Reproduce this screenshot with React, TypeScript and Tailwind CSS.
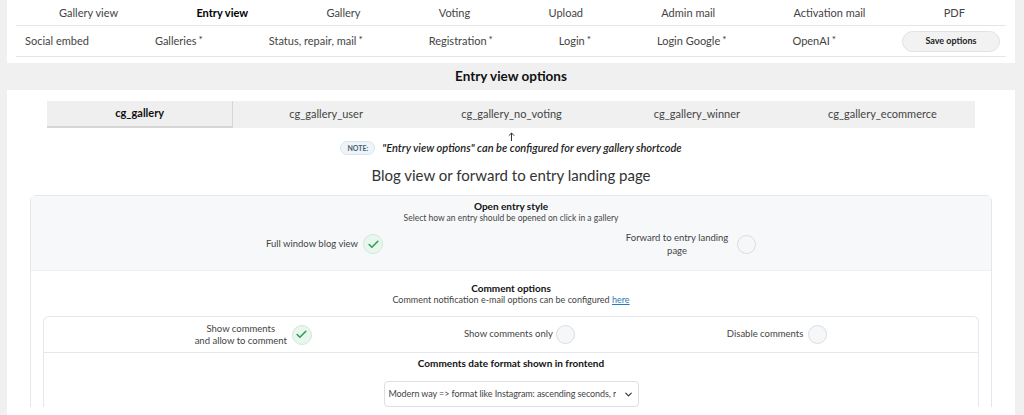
import { ChevronDown, Check } from "lucide-react"

const navTop = ["Gallery view", "Entry view", "Gallery", "Voting", "Upload", "Admin mail", "Activation mail", "PDF"]
const navBottom = ["Social embed", "Galleries", "Status, repair, mail", "Registration", "Login", "Login Google", "OpenAI"]
const tabs = ["cg_gallery", "cg_gallery_user", "cg_gallery_no_voting", "cg_gallery_winner", "cg_gallery_ecommerce"]

function Radio({ checked }: { checked?: boolean }) {
  if (checked) {
    return (
      <span className="flex h-[20px] w-[20px] shrink-0 items-center justify-center rounded-full border border-[#cfe9d8] bg-[#e9f6ee]">
        <Check className="h-[13px] w-[13px] text-[#2f9d5a]" strokeWidth={3} />
      </span>
    )
  }
  return <span className="block h-[19px] w-[19px] shrink-0 rounded-full border border-[#d9dde3] bg-[#f6f7f9]" />
}

export default function App() {
  return (
    <div className="flex min-h-[415px] bg-[#f0f0f1] font-['Lato',sans-serif] text-[#333]">
      <div className="ml-[7px] w-[1008px] bg-white">
        {/* top navigation */}
        <div className="mx-[9px] flex h-[26px] items-center justify-between border-b border-[#e6e6e6] pl-[43px] pr-[41px] pt-[1px] text-[11px] text-[#444]">
          {navTop.map((n) => (
            <span key={n} className={n === "Entry view" ? "font-bold text-black" : ""}>
              {n}
            </span>
          ))}
        </div>
        <div className="mx-[9px] flex h-[31px] items-center justify-between border-b border-[#e6e6e6] pl-[9px] pr-[6px] text-[11px] text-[#444]">
          {navBottom.map((n, i) => (
            <span key={n} className="flex items-start">
              {n}
              {i > 0 && <span className="ml-[2px] text-[10px] leading-[12px] text-[#333]">*</span>}
            </span>
          ))}
          <button className="h-[21px] w-[98px] rounded-full border border-[#e2e2e2] bg-[#f2f2f2] text-[9px] font-bold text-[#222]">
            Save options
          </button>
        </div>

        <div className="mt-[6px] flex h-[27px] items-center justify-center bg-[#f0f0f0] text-[13.5px] font-bold text-[#111]">
          Entry view options
        </div>

        {/* shortcode tabs */}
        <div className="mx-[40px] mt-[11px] flex h-[27px] bg-[#f0f0f0] text-[11px] text-[#444]">
          {tabs.map((t, i) => (
            <div
              key={t}
              className={
                i === 0
                  ? "flex flex-1 items-center justify-center border-r border-b-2 border-[#d6d6d6] bg-[#efefef] font-bold text-[#111]"
                  : "flex flex-1 items-center justify-center"
              }
            >
              {t}
            </div>
          ))}
        </div>

        <div className="mt-[4px] flex h-[9px] justify-center">
          <svg width="7" height="9" viewBox="0 0 7 9" fill="none" stroke="#333" strokeWidth="1">
            <path d="M3.5 9V1M0.8 3.7L3.5 1l2.7 2.7" />
          </svg>
        </div>
        <div className="flex h-[14px] items-center justify-center gap-[7px]">
          <span className="rounded-full border border-[#d6e4f0] bg-[#eef4fa] px-[6px] py-[1px] text-[7px] font-bold leading-[10px] text-[#4a5d70]">
            NOTE:
          </span>
          <span className="text-[11px] font-semibold italic text-[#222]">
            "Entry view options" can be configured for every gallery shortcode
          </span>
        </div>

        <div className="mt-[10px] text-center text-[15px] leading-[20px] text-[#333]">
          Blog view or forward to entry landing page
        </div>

        {/* options box */}
        <div className="mx-[23px] mt-[10px] rounded-t-[6px] border border-b-0 border-[#e4e7eb]">
          <div className="flex flex-col items-center bg-[#f7f8fa] pb-[13px] pt-[4px]">
            <div className="text-[10px] font-bold leading-[12px] text-[#111]">Open entry style</div>
            <div className="text-[8.5px] leading-[12px] text-[#444]">
              Select how an entry should be opened on click in a gallery
            </div>
            <div className="mt-[7px] flex h-[26px] items-center justify-center gap-[241px] text-[9.5px] text-[#444]">
              <div className="flex items-center gap-[5px]">
                <span>Full window blog view</span>
                <Radio checked />
              </div>
              <div className="flex items-center gap-[7px]">
                <span className="w-[106px] text-center leading-[13px]">Forward to entry landing page</span>
                <Radio />
              </div>
            </div>
          </div>

          <div className="flex flex-col items-center border-t border-[#eef0f3] bg-white pt-[11px]">
            <div className="text-[10px] font-bold leading-[12px] text-[#111]">Comment options</div>
            <div className="text-[9px] leading-[12px] text-[#444]">
              Comment notification e-mail options can be configured{" "}
              <a className="text-[#2a7ac0] underline">here</a>
            </div>
          </div>

          <div className="mx-[12px] mt-[10px] rounded-t-[6px] border border-b-0 border-[#e4e7eb]">
            <div className="flex h-[36px] items-center justify-center gap-[152px] border-b border-[#e4e7eb] text-[9.5px] text-[#444]">
              <div className="flex items-center gap-[5px]">
                <span className="text-center leading-[12px]">
                  Show comments
                  <br />
                  and allow to comment
                </span>
                <Radio checked />
              </div>
              <div className="flex items-center gap-[3px]">
                <span>Show comments only</span>
                <Radio />
              </div>
              <div className="flex items-center gap-[5px]">
                <span>Disable comments</span>
                <Radio />
              </div>
            </div>
            <div className="flex flex-col items-center pt-[4px]">
              <div className="text-[10px] font-bold leading-[12px] text-[#111]">Comments date format shown in frontend</div>
              <div className="mt-[12px] flex h-[26px] w-[255px] items-center justify-between overflow-hidden rounded-[4px] border border-[#dcdfe4] pl-[4px] pr-[4px] text-[9px] tracking-[-0.1px] text-[#444]">
                <span className="overflow-hidden whitespace-nowrap">
                  Modern way =&gt; format like Instagram: ascending seconds, r
                </span>
                <ChevronDown className="ml-[2px] h-[11px] w-[11px] shrink-0 text-[#333]" strokeWidth={2.5} />
              </div>
            </div>
          </div>
        </div>
      </div>
    </div>
  )
}
